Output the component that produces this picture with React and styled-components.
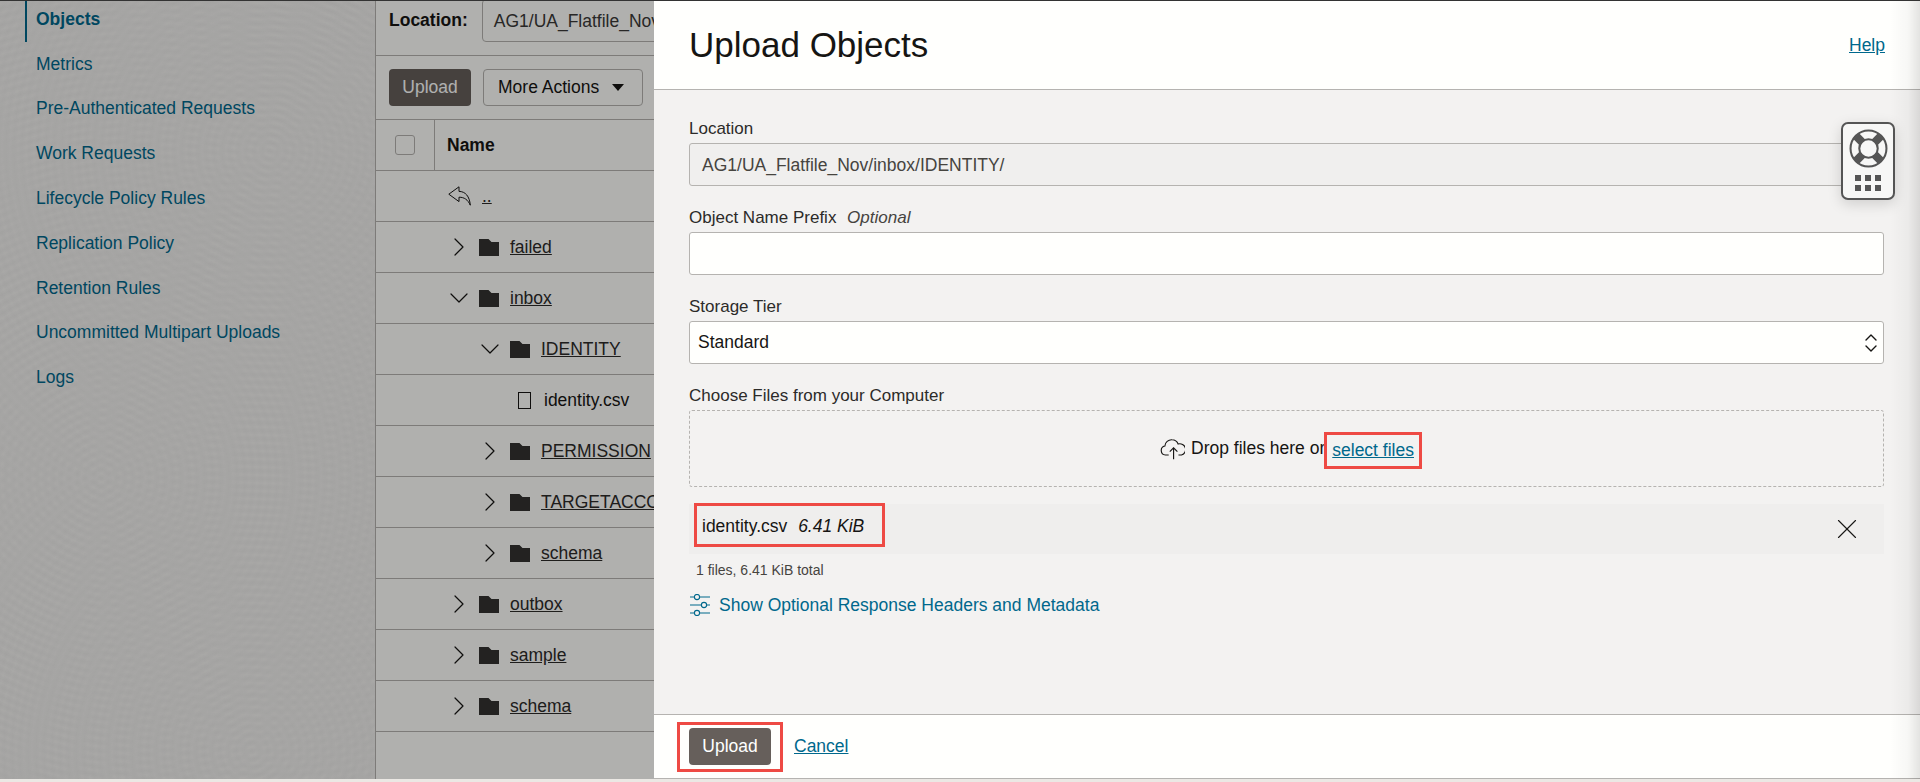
import React from 'react';
import styled, { createGlobalStyle } from 'styled-components';
import { ChevronRight, ChevronDown, ChevronsUpDown, X } from 'lucide-react';

const navItems = [
  'Objects',
  'Metrics',
  'Pre-Authenticated Requests',
  'Work Requests',
  'Lifecycle Policy Rules',
  'Replication Policy',
  'Retention Rules',
  'Uncommitted Multipart Uploads',
  'Logs',
];

const rows = [
  { name: 'failed', depth: 0, state: 'closed' },
  { name: 'inbox', depth: 0, state: 'open' },
  { name: 'IDENTITY', depth: 1, state: 'open' },
  { name: 'identity.csv', depth: 1, state: 'file' },
  { name: 'PERMISSION', depth: 1, state: 'closed' },
  { name: 'TARGETACCOUNT', depth: 1, state: 'closed' },
  { name: 'schema', depth: 1, state: 'closed' },
  { name: 'outbox', depth: 0, state: 'closed' },
  { name: 'sample', depth: 0, state: 'closed' },
  { name: 'schema', depth: 0, state: 'closed' },
];

function FolderIcon() {
  return (
    <svg width="20" height="17" viewBox="0 0 20 17">
      <path d="M0 0h9.5l3 3H20v14H0z" fill="#333230" />
    </svg>
  );
}

function FileOutline() {
  return (
    <svg width="13" height="17" viewBox="0 0 13 17">
      <rect x="0.5" y="0.5" width="12" height="16" fill="none" stroke="#161513" />
    </svg>
  );
}

function BackArrow() {
  return (
    <svg width="23" height="20" viewBox="0 0 23 20">
      <path
        d="M0.8 8.2 11 0.8v4.6c6.4 0 10.6 5 11.3 13.8-2.5-5.6-6-8-11.3-8v4.4z"
        fill="none"
        stroke="#161513"
        strokeWidth="1"
        strokeLinejoin="round"
      />
    </svg>
  );
}

function CloudArrow() {
  return (
    <svg width="25" height="22" viewBox="0 0 23 20" fill="none" stroke="#161513" strokeWidth="1.05">
      <path d="M8 15.5H5a4.2 4.2 0 0 1-.5-8.3A6.2 6.2 0 0 1 11 1.5c2.6 0 4.8 1.6 5.7 3.9a5.1 5.1 0 0 1 3.1 10.1H17" />
      <path d="M12.5 19.5V9M9 12.5 12.5 9l3.5 3.5" />
    </svg>
  );
}

function SliderLines() {
  return (
    <svg width="22" height="22" viewBox="0 0 22 22" fill="none" stroke="#00688c" strokeWidth="1.1">
      <path d="M1 3h4M11 3h10M1 11h11M18 11h3M1 19h4M11 19h10" />
      <circle cx="8" cy="3" r="2.6" />
      <circle cx="15" cy="11" r="2.6" />
      <circle cx="8" cy="19" r="2.6" />
    </svg>
  );
}

function LifeRing() {
  return (
    <svg width="39" height="39" viewBox="0 0 38 38">
      <circle cx="19" cy="19" r="17.5" fill="none" stroke="#555" strokeWidth="2" />
      <circle cx="19" cy="19" r="9" fill="none" stroke="#555" strokeWidth="2" />
      <path d="M7 7l6 6M31 7l-6 6M7 31l6-6M31 31l-6-6" stroke="#555" strokeWidth="8" />
    </svg>
  );
}

function ObjectRow({ name, depth, state }) {
  return (
    <Row>
      <RowIndent $depth={depth}>
        {state === 'file' ? (
          <>
            <FileGlyph><FileOutline /></FileGlyph>
            <FileName>{name}</FileName>
          </>
        ) : (
          <>
            <Caret>
              {state === 'open' ? <ChevronDown size={32} strokeWidth={0.9} /> : <ChevronRight size={32} strokeWidth={0.9} />}
            </Caret>
            <FolderIcon />
            <RowLink>{name}</RowLink>
          </>
        )}
      </RowIndent>
    </Row>
  );
}

export default function App() {
  return (
    <Page>
      <GlobalStyle />
      <Sidebar>
        {navItems.map((item, i) => (
          <NavItem key={item} $active={i === 0}>{item}</NavItem>
        ))}
      </Sidebar>

      <Main>
        <LocationBar>
          <strong>Location:</strong>
          <LocationBox>AG1/UA_Flatfile_Nov</LocationBox>
        </LocationBar>
        <Toolbar>
          <PrimaryButton $wide={82}>Upload</PrimaryButton>
          <OutlineButton>More Actions <Arrow /></OutlineButton>
        </Toolbar>
        <HeaderRow>
          <CheckCell><Checkbox /></CheckCell>
          <NameCell>Name</NameCell>
        </HeaderRow>
        <Row>
          <RowIndent $depth={0}>
            <BackGlyph><BackArrow /></BackGlyph>
            <RowLink>..</RowLink>
          </RowIndent>
        </Row>
        {rows.map((r, i) => (
          <ObjectRow key={i} {...r} />
        ))}
      </Main>

      <Scrim />

      <Drawer>
        <DrawerHeader>
          <Title>Upload Objects</Title>
          <Link>Help</Link>
        </DrawerHeader>

        <DrawerBody>
          <Field>
            <Label>Location</Label>
            <TextBox $disabled>AG1/UA_Flatfile_Nov/inbox/IDENTITY/</TextBox>
          </Field>
          <Field>
            <Label>Object Name Prefix <em>Optional</em></Label>
            <TextBox />
          </Field>
          <Field>
            <Label>Storage Tier</Label>
            <SelectBox>
              Standard
              <ChevronsUpDown size={24} strokeWidth={1.4} />
            </SelectBox>
          </Field>
          <Field>
            <Label>Choose Files from your Computer</Label>
            <DropZone>
              <CloudArrow />
              <span>Drop files here or</span>
              <SelectHighlight><Link>select files</Link></SelectHighlight>
            </DropZone>
          </Field>
          <FileRow>
            <FileHighlight>
              identity.csv <FileSize>6.41 KiB</FileSize>
            </FileHighlight>
            <RemoveButton><X size={34} strokeWidth={0.8} /></RemoveButton>
          </FileRow>
          <FileTotal>1 files, 6.41 KiB total</FileTotal>
          <MetaToggle>
            <SliderLines />
            <span>Show Optional Response Headers and Metadata</span>
          </MetaToggle>
        </DrawerBody>

        <DrawerFooter>
          <ButtonHighlight>
            <PrimaryButton $wide={82}>Upload</PrimaryButton>
          </ButtonHighlight>
          <Link>Cancel</Link>
        </DrawerFooter>

        <HelpWidget>
          <LifeRing />
          <HelpDots>
            {Array.from({ length: 6 }).map((_, i) => <i key={i} />)}
          </HelpDots>
        </HelpWidget>
        <EdgeShade />
      </Drawer>
      <BottomStrip />
    </Page>
  );
}

const GlobalStyle = createGlobalStyle`
  html, body {
    margin: 0;
    background: #e9e8e6;
  }
  * {
    box-sizing: border-box;
  }
`;

const Page = styled.div`
  position: relative;
  display: flex;
  width: 1920px;
  height: 782px;
  overflow: hidden;
  font-family: "Liberation Sans", Arial, sans-serif;
  font-size: 17.5px;
  color: #161513;
  background: #fffffd;
  border-top: 1px solid #333;
`;

const Sidebar = styled.nav`
  flex: none;
  width: 376px;
  padding-left: 25px;
  border-right: 1px solid #b5b3b0;
  background-color: #f4f3f1;
  background-image:
    repeating-radial-gradient(circle at 101px 477px, rgba(0, 0, 0, 0.012) 0, transparent 4px, rgba(0, 0, 0, 0.012) 8px),
    repeating-radial-gradient(circle at 270px 150px, rgba(0, 0, 0, 0.012) 0, transparent 4px, rgba(0, 0, 0, 0.012) 8px),
    repeating-radial-gradient(circle at 252px 750px, rgba(0, 0, 0, 0.012) 0, transparent 4px, rgba(0, 0, 0, 0.012) 8px);
`;

const NavItem = styled.div`
  display: flex;
  align-items: center;
  height: 44.8px;
  margin-top: ${({ $active }) => ($active ? '-4px' : '0')};
  padding-left: ${({ $active }) => ($active ? '9px' : '11px')};
  color: #00688c;
  font-weight: ${({ $active }) => ($active ? 700 : 400)};
  border-left: ${({ $active }) => ($active ? '2px solid #00688c' : 'none')};
`;

const Main = styled.main`
  flex: 1;
  min-width: 0;
`;

const LocationBar = styled.div`
  display: flex;
  align-items: center;
  gap: 14px;
  height: 56px;
  margin-top: -1px;
  padding: 0 13px 15px;
  border-bottom: 1px solid #b5b3b0;

  strong {
    font-weight: 700;
  }
`;

const LocationBox = styled.div`
  align-self: flex-start;
  width: 500px;
  height: 43px;
  margin-top: -1px;
  padding: 11px;
  white-space: nowrap;
  color: #3a3937;
  border: 1px solid #b5b3b0;
  border-radius: 4px;
`;

const Toolbar = styled.div`
  display: flex;
  gap: 12px;
  height: 64px;
  padding: 13px 13px 0;
  border-bottom: 1px solid #b5b3b0;
`;

const PrimaryButton = styled.button`
  width: ${({ $wide }) => $wide}px;
  height: 37px;
  padding: 0;
  font: inherit;
  color: #fff;
  background: #665f5b;
  border: none;
  border-radius: 4px;
`;

const OutlineButton = styled.button`
  display: inline-flex;
  align-items: center;
  justify-content: space-between;
  width: 160px;
  height: 37px;
  padding: 0 18px 0 14px;
  font: inherit;
  color: #161513;
  background: transparent;
  border: 1px solid #b5b3b0;
  border-radius: 4px;
`;

const Arrow = styled.span`
  border-left: 6px solid transparent;
  border-right: 6px solid transparent;
  border-top: 7px solid #161513;
`;

const HeaderRow = styled.div`
  display: flex;
  height: 51px;
  border-bottom: 1px solid #b5b3b0;
`;

const CheckCell = styled.div`
  display: flex;
  align-items: center;
  justify-content: center;
  width: 59px;
  border-right: 1px solid #b5b3b0;
`;

const Checkbox = styled.span`
  width: 20px;
  height: 20px;
  border: 1px solid #b5b3b0;
  border-radius: 3px;
`;

const NameCell = styled.div`
  display: flex;
  align-items: center;
  padding: 1px 0 0 12px;
  font-weight: 700;
`;

const Row = styled.div`
  display: flex;
  align-items: center;
  height: 51px;
  border-bottom: 1px solid #b5b3b0;
`;

const RowIndent = styled.div`
  display: flex;
  align-items: center;
  padding-left: ${({ $depth }) => 71 + $depth * 31}px;
  white-space: nowrap;
`;

const Caret = styled.span`
  display: flex;
  justify-content: center;
  width: 24px;
  margin-right: 8px;
  color: #161513;

  svg {
    flex: none;
    margin: 0 -4px;
  }
`;

const BackGlyph = styled.span`
  display: flex;
  margin-left: 1px;
`;

const FileGlyph = styled.span`
  display: flex;
  margin-left: 40px;
`;

const RowLink = styled.span`
  margin-left: 11px;
  color: #2c2b29;
  text-decoration: underline;
`;

const FileName = styled.span`
  margin-left: 13px;
`;

const Scrim = styled.div`
  position: absolute;
  inset: 0;
  background: rgba(0, 0, 0, 0.31);
`;

const Drawer = styled.aside`
  position: absolute;
  top: 0;
  right: 0;
  bottom: 3px;
  display: flex;
  flex-direction: column;
  width: 1266px;
  background: #f3f2f1;
`;

const DrawerHeader = styled.header`
  display: flex;
  align-items: center;
  justify-content: space-between;
  flex: none;
  height: 89px;
  padding: 0 35px;
  background: #fffffd;
  border-bottom: 1px solid #b5b3b0;
`;

const Title = styled.h1`
  margin: 0;
  font-size: 35px;
  font-weight: 400;
`;

const Link = styled.a`
  color: #00688c;
  text-decoration: underline;
`;

const DrawerBody = styled.div`
  flex: 1;
  padding: 27px 36px 0 35px;
`;

const Field = styled.div`
  margin-bottom: 20px;
`;

const Label = styled.div`
  height: 26px;
  font-size: 17px;
  line-height: 23px;
  color: #2c2b29;

  em {
    margin-left: 6px;
    color: #46443f;
  }
`;

const TextBox = styled.div`
  height: 43px;
  padding: 11px 12px;
  color: #46443f;
  background: ${({ $disabled }) => ($disabled ? '#f0efee' : '#fffffd')};
  border: 1px solid #b5b3b0;
  border-radius: 3px;
`;

const SelectBox = styled.div`
  display: flex;
  align-items: center;
  justify-content: space-between;
  height: 43px;
  padding: 0 0 0 8px;
  background: #fffffd;
  border: 1px solid #b5b3b0;
  border-radius: 3px;
`;

const DropZone = styled.div`
  display: flex;
  align-items: center;
  justify-content: center;
  gap: 6px;
  height: 77px;
  padding-left: 9px;
  border: 1px dashed #b5b3b0;
  border-radius: 3px;
`;

const SelectHighlight = styled.span`
  margin: 3px 0 0 -7px;
  padding: 5px 5px 5px 5px;
  border: 3px solid #ee4a44;
`;

const FileRow = styled.div`
  display: flex;
  align-items: center;
  justify-content: space-between;
  height: 50px;
  margin-top: -3px;
  padding: 0 20px 0 5px;
  background: #efeeed;
`;

const FileHighlight = styled.span`
  align-self: flex-start;
  height: 44px;
  margin-top: -1px;
  padding: 10px 18px 0 5px;
  white-space: nowrap;
  border: 3px solid #ee4a44;
`;

const FileSize = styled.em`
  margin-left: 6px;
`;

const RemoveButton = styled.span`
  display: flex;
`;

const FileTotal = styled.div`
  margin: 8px 0 0 7px;
  font-size: 14px;
  line-height: 16px;
  color: #46443f;
`;

const MetaToggle = styled.div`
  display: flex;
  align-items: center;
  gap: 8px;
  margin-top: 16px;
  color: #00688c;
`;

const DrawerFooter = styled.footer`
  display: flex;
  align-items: center;
  gap: 11px;
  flex: none;
  height: 65px;
  padding-left: 23px;
  background: #fffffd;
  border-top: 1px solid #b5b3b0;
  border-bottom: 1px solid #b5b3b0;
`;

const ButtonHighlight = styled.span`
  display: block;
  padding: 3px 9px 4px;
  border: 3px solid #ee4a44;
  line-height: 0;
`;

const HelpWidget = styled.div`
  position: absolute;
  top: 121px;
  right: 25px;
  display: flex;
  flex-direction: column;
  align-items: center;
  gap: 7px;
  width: 54px;
  height: 78px;
  padding-top: 5px;
  background: #f7f7f6;
  border: 2px solid #555;
  border-radius: 7px;
  box-shadow: 0 4px 14px rgba(0, 0, 0, 0.15);
`;

const HelpDots = styled.div`
  display: grid;
  grid-template-columns: repeat(3, 6px);
  gap: 4px;

  i {
    display: block;
    height: 6px;
    background: #555;
  }
`;

const EdgeShade = styled.div`
  position: absolute;
  top: 0;
  right: 0;
  bottom: 0;
  width: 30px;
  background: linear-gradient(to right, rgba(0, 0, 0, 0), rgba(0, 0, 0, 0.03) 60%, rgba(0, 0, 0, 0.11));
`;

const BottomStrip = styled.div`
  position: absolute;
  left: 0;
  right: 0;
  bottom: 0;
  height: 3px;
  background: #ebe8e4;
`;
